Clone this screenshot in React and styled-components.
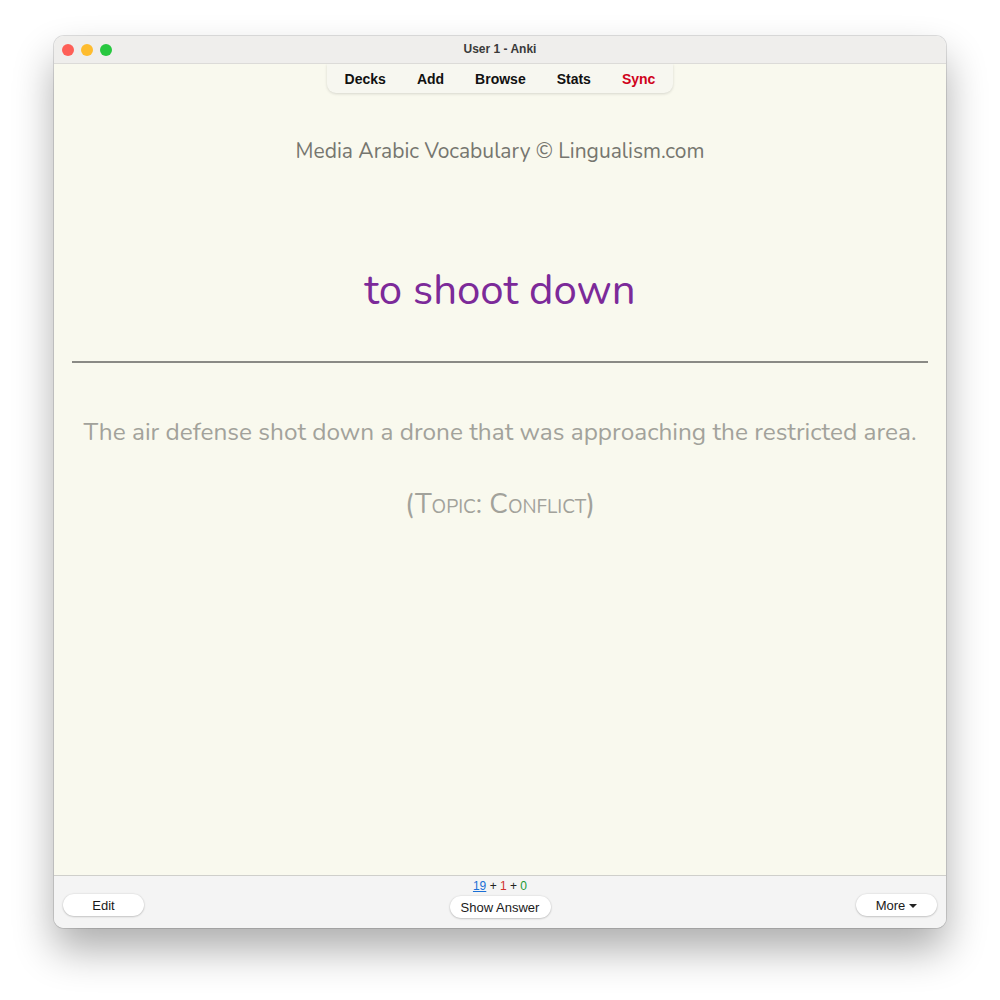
import React from 'react'
import styled, { createGlobalStyle } from 'styled-components'

const GlobalStyle = createGlobalStyle`
    html, body {
        margin: 0;
        padding: 0;
        background: #ffffff;
    }
    body {
        width: 1000px;
        height: 1000px;
        overflow: hidden;
    }
`
const Page = styled.div`
    padding: 36px 54px;
`
const Window = styled.div`
    width: 892px;
    height: 892px;
    display: flex;
    flex-direction: column;
    border-radius: 10px;
    overflow: hidden;
    box-shadow: 0 22px 40px rgba(0, 0, 0, 0.32), 0 0 0 1px rgba(0, 0, 0, 0.12);
    font-family: 'Liberation Sans', Arial, sans-serif;
`
const TitleBar = styled.div`
    height: 28px;
    flex: none;
    display: flex;
    align-items: center;
    justify-content: center;
    padding-bottom: 2px;
    position: relative;
    background: #efeeec;
    border-bottom: 1px solid #dcdbd8;
    box-sizing: border-box;
    font-size: 12px;
    font-weight: bold;
    color: #3a3a3a;
`
const Lights = styled.div`
    position: absolute;
    left: 8px;
    top: 8px;
    display: flex;
    gap: 7px;
`
const Light = styled.span`
    width: 12px;
    height: 12px;
    border-radius: 50%;
    background: ${(p) => p.color};
`
const Main = styled.div`
    flex: 1;
    display: flex;
    flex-direction: column;
    align-items: center;
    background: #f9f9ee;
    border-bottom: 1px solid #cfcfcb;
`
const Toolbar = styled.nav`
    display: flex;
    align-items: center;
    height: 29px;
    padding: 0 2px;
    background: #f7f7f0;
    border-radius: 0 0 9px 9px;
    box-shadow: 0 1px 3px rgba(0, 0, 0, 0.14);
`
const ToolItem = styled.span`
    padding: 0 15.5px;
    font-size: 14px;
    font-weight: bold;
    color: ${(p) => (p.alert ? '#d0021b' : '#111111')};
`
const Card = styled.div`
    width: 100%;
    display: flex;
    flex-direction: column;
    align-items: center;
    font-family: Nunito, Lato, 'Noto Sans', sans-serif;
    text-align: center;
`
const DeckName = styled.div`
    margin-top: 45px;
    font-size: 21px;
    line-height: 27px;
    color: #76766f;
`
const Front = styled.div`
    margin-top: 100px;
    font-size: 42px;
    line-height: 52px;
    color: #7c2a99;
`
const Divider = styled.hr`
    width: calc(100% - 36px);
    margin: 44px 0 0;
    border: none;
    border-top: 2px solid #8a8a85;
`
const Sentence = styled.div`
    margin-top: 53px;
    font-size: 24.4px;
    line-height: 33px;
    color: #a2a29b;
`
const Topic = styled.div`
    margin-top: 39px;
    font-size: 27.7px;
    line-height: 33px;
    font-variant: small-caps;
    color: #a2a29b;
`
const BottomBar = styled.div`
    height: 52px;
    flex: none;
    display: grid;
    grid-template-columns: 1fr auto 1fr;
    align-items: end;
    padding: 0 9px 10px 9px;
    box-sizing: border-box;
    background: #f4f4f4;
`
const Middle = styled.div`
    display: flex;
    flex-direction: column;
    align-items: center;
    gap: 2px;
`
const Counts = styled.div`
    font-size: 12px;
    line-height: 15px;
    color: #222;
`
const Count = styled.span`
    color: ${(p) => p.color};
    text-decoration: ${(p) => (p.underline ? 'underline' : 'none')};
`
const Button = styled.button`
    justify-self: ${(p) => p.align || 'center'};
    width: ${(p) => p.width}px;
    height: 22px;
    margin-bottom: ${(p) => p.lift || 0}px;
    padding: 0;
    border: none;
    border-radius: 11px;
    background: #ffffff;
    box-shadow: 0 0.5px 2px rgba(0, 0, 0, 0.3);
    font-family: 'Liberation Sans', Arial, sans-serif;
    font-size: 13px;
    color: #1a1a1a;
    display: flex;
    align-items: center;
    justify-content: center;
    gap: 4px;
`
const Caret = styled.span`
    width: 0;
    height: 0;
    border-left: 4px solid transparent;
    border-right: 4px solid transparent;
    border-top: 4px solid #222;
    margin-top: 1px;
`

const App = () => {
    return (
        <Page>
            <GlobalStyle />
            <Window>
                <TitleBar>
                    <Lights>
                        <Light color="#fe5f57" />
                        <Light color="#febc2e" />
                        <Light color="#28c840" />
                    </Lights>
                    User 1 - Anki
                </TitleBar>
                <Main>
                    <Toolbar>
                        <ToolItem>Decks</ToolItem>
                        <ToolItem>Add</ToolItem>
                        <ToolItem>Browse</ToolItem>
                        <ToolItem>Stats</ToolItem>
                        <ToolItem alert>Sync</ToolItem>
                    </Toolbar>
                    <Card>
                        <DeckName>Media Arabic Vocabulary © Lingualism.com</DeckName>
                        <Front>to shoot down</Front>
                        <Divider />
                        <Sentence>The air defense shot down a drone that was approaching the restricted area.</Sentence>
                        <Topic>(Topic: Conflict)</Topic>
                    </Card>
                </Main>
                <BottomBar>
                    <Button align="start" width={81} lift={2}>Edit</Button>
                    <Middle>
                        <Counts>
                            <Count color="#1a6fd6" underline>19</Count> + <Count color="#d0312d">1</Count> +{' '}
                            <Count color="#1b9a35">0</Count>
                        </Counts>
                        <Button width={101}>Show Answer</Button>
                    </Middle>
                    <Button align="end" width={81} lift={2}>
                        More <Caret />
                    </Button>
                </BottomBar>
            </Window>
        </Page>
    )
}
export default App
